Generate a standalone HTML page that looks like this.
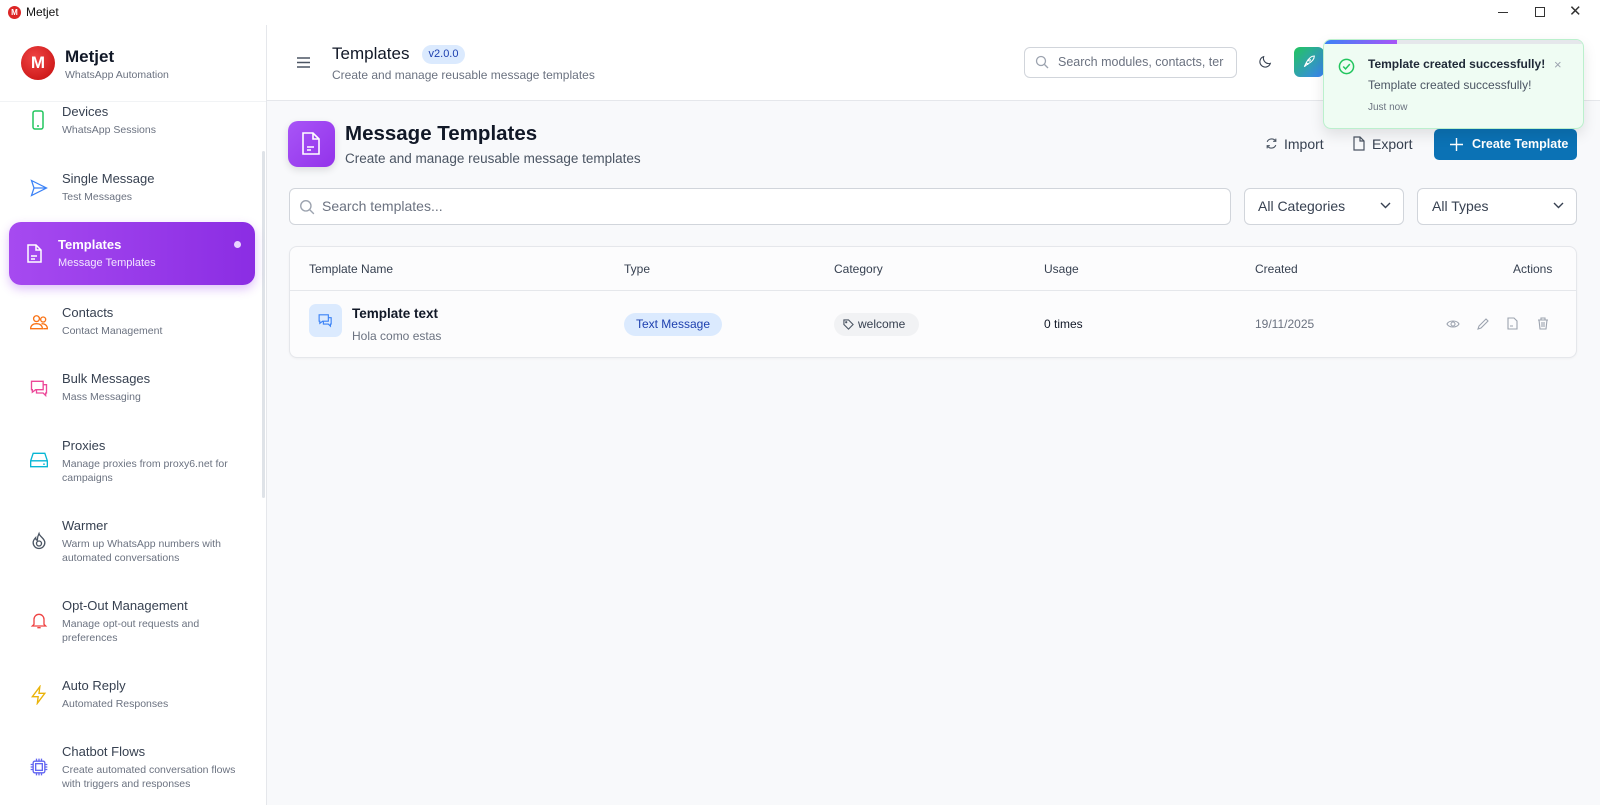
<!DOCTYPE html>
<html><head><meta charset="utf-8"><style>
*{box-sizing:border-box;margin:0;padding:0}
body{width:1600px;height:805px;overflow:hidden;background:#fff;font-family:"Liberation Sans",sans-serif;color:#111827;position:relative}
.a{position:absolute}
svg{display:block}
.nt{position:absolute;left:62px;font-size:13px;color:#374151;line-height:16px}
.ns{position:absolute;left:62px;font-size:10.5px;color:#6b7280;line-height:14px;width:180px}
.ni{position:absolute;left:29px}
.th{position:absolute;top:262px;font-size:12px;color:#374151}
</style></head><body>
<div class="a" style="left:0;top:0;width:1600px;height:25px;background:#fff"></div>
<div class="a" style="left:8px;top:6px;width:13px;height:13px;border-radius:50%;background:#dc2626;color:#fff;font-size:8px;font-weight:bold;text-align:center;line-height:13px">M</div>
<div class="a" style="left:26px;top:5px;font-size:12px;color:#111">Metjet</div>
<div class="a" style="left:1498px;top:12px;width:10px;height:1px;background:#333"></div>
<div class="a" style="left:1535px;top:7px;width:10px;height:10px;border:1px solid #333"></div>
<div class="a" style="left:1569px;top:2px;font-size:15px;color:#333">✕</div>
<div class="a" style="left:266px;top:25px;width:1px;height:780px;background:#e5e7eb"></div>
<div class="a" style="left:21px;top:46px;width:34px;height:34px;border-radius:50%;background:radial-gradient(circle at 40% 35%,#ef4444,#c40c0c);color:#fff;font-weight:bold;font-size:17px;text-align:center;line-height:34px">M</div>
<div class="a" style="left:65px;top:47px;font-size:17px;font-weight:bold;color:#111827">Metjet</div>
<div class="a" style="left:65px;top:69px;font-size:10.5px;color:#6b7280">WhatsApp Automation</div>
<div class="a" style="left:0;top:101px;width:266px;height:1px;background:#f1f3f5"></div>
<div class="a" style="left:262px;top:151px;width:3px;height:347px;background:#dfe3e8;border-radius:2px"></div>

<div class="nt" style="top:104px">Devices</div><div class="ns" style="top:123px">WhatsApp Sessions</div>
<svg class="ni" style="top:110px" width="18" height="20" viewBox="0 0 18 20" fill="none" stroke="#22c55e" stroke-width="1.5"><rect x="4" y="1" width="10" height="18" rx="2"/><path d="M8 16h2"/></svg>
<div class="nt" style="top:171px">Single Message</div><div class="ns" style="top:190px">Test Messages</div>
<svg class="ni" style="top:178px" width="20" height="20" viewBox="0 0 24 24" fill="none" stroke="#3b82f6" stroke-width="1.5"><path d="M3 3l18 9-18 9 3-9zM6 12h15"/></svg>

<div class="a" style="left:9px;top:222px;width:246px;height:63px;border-radius:12px;background:linear-gradient(90deg,#a64af0,#8b2de3);box-shadow:0 4px 10px rgba(147,51,234,.3)"></div>
<div class="a" style="left:58px;top:237px;font-size:13px;font-weight:bold;color:#fff">Templates</div>
<div class="a" style="left:58px;top:257px;font-size:11px;color:#f3e8ff">Message Templates</div>
<div class="a" style="left:234px;top:241px;width:7px;height:7px;border-radius:50%;background:#e9d5ff"></div>
<svg class="a" style="left:25px;top:244px" width="18" height="20" viewBox="0 0 18 20" fill="none" stroke="#fff" stroke-width="1.5"><path d="M3 1h8l5 5v12H3z"/><path d="M11 1v5h5M6 12h6M6 15h4"/></svg>

<div class="nt" style="top:305px">Contacts</div><div class="ns" style="top:324px">Contact Management</div>
<svg class="ni" style="top:312px" width="20" height="20" viewBox="0 0 24 24" fill="none" stroke="#f97316" stroke-width="1.6"><circle cx="9" cy="8" r="3.5"/><circle cx="17" cy="9" r="3"/><path d="M2 20c0-4 3-6 7-6s7 2 7 6zM15 14c4 0 7 2 7 6h-5"/></svg>
<div class="nt" style="top:371px">Bulk Messages</div><div class="ns" style="top:390px">Mass Messaging</div>
<svg class="ni" style="top:378px" width="20" height="20" viewBox="0 0 24 24" fill="none" stroke="#ec4899" stroke-width="1.6"><path d="M3 4h14v10H8l-4 3v-3H3zM17 8h4v10h-1v3l-3-3H9v-4"/></svg>
<div class="nt" style="top:438px">Proxies</div><div class="ns" style="top:457px">Manage proxies from proxy6.net for campaigns</div>
<svg class="ni" style="top:451px" width="20" height="18" viewBox="0 0 24 20" fill="none" stroke="#06b6d4" stroke-width="1.6"><path d="M5 2h14l3 9v7H2v-7zM2 11h20M17 15h2"/></svg>
<div class="nt" style="top:518px">Warmer</div><div class="ns" style="top:537px">Warm up WhatsApp numbers with automated conversations</div>
<svg class="ni" style="top:531px" width="20" height="20" viewBox="0 0 24 24" fill="none" stroke="#4b5563" stroke-width="1.6"><path d="M12 3c1 4 7 6 7 11a7 7 0 01-14 0c0-3 2-5 3-6 0 2 1 3 2 3 0-3 1-6 2-8z"/><circle cx="12" cy="15" r="3"/></svg>
<div class="nt" style="top:598px">Opt-Out Management</div><div class="ns" style="top:617px">Manage opt-out requests and preferences</div>
<svg class="ni" style="top:611px" width="20" height="20" viewBox="0 0 24 24" fill="none" stroke="#ef4444" stroke-width="1.6"><path d="M6 16V10a6 6 0 0112 0v6l2 2H4zM10 20h4"/></svg>
<div class="nt" style="top:678px">Auto Reply</div><div class="ns" style="top:697px">Automated Responses</div>
<svg class="ni" style="top:685px" width="20" height="20" viewBox="0 0 24 24" fill="none" stroke="#eab308" stroke-width="1.6"><path d="M13 2L4 14h7l-1 8 9-12h-7z"/></svg>
<div class="nt" style="top:744px">Chatbot Flows</div><div class="ns" style="top:763px">Create automated conversation flows with triggers and responses</div>
<svg class="ni" style="top:757px" width="20" height="20" viewBox="0 0 24 24" fill="none" stroke="#6366f1" stroke-width="1.6"><rect x="5" y="5" width="14" height="14" rx="2"/><rect x="8" y="8" width="8" height="8"/><path d="M9 2v3M12 2v3M15 2v3M9 19v3M12 19v3M15 19v3M2 9h3M2 12h3M2 15h3M19 9h3M19 12h3M19 15h3"/></svg>

<div class="a" style="left:267px;top:100px;width:1333px;height:705px;background:#f8f9fb"></div>
<div class="a" style="left:267px;top:100px;width:1333px;height:1px;background:#e5e7eb"></div>
<svg class="a" style="left:297px;top:57px" width="13" height="11" viewBox="0 0 13 11" stroke="#4b5563" stroke-width="1.5"><path d="M0 1h13M0 5.5h13M0 10h13"/></svg>
<div class="a" style="left:332px;top:44px;font-size:17px;color:#111827">Templates</div>
<div class="a" style="left:422px;top:45px;width:43px;height:19px;border-radius:10px;background:#dbeafe;color:#1e40af;font-size:11px;text-align:center;line-height:19px">v2.0.0</div>
<div class="a" style="left:332px;top:68px;font-size:12px;color:#6b7280">Create and manage reusable message templates</div>
<div class="a" style="left:1024px;top:47px;width:213px;height:31px;border:1px solid #d1d5db;border-radius:6px;background:#fff"></div>
<svg class="a" style="left:1035px;top:55px" width="14" height="14" viewBox="0 0 14 14" fill="none" stroke="#9ca3af" stroke-width="1.3"><circle cx="6" cy="6" r="4.5"/><path d="M9.5 9.5L13 13"/></svg>
<div class="a" style="left:1058px;top:55px;font-size:12.5px;color:#6b7280;width:172px;overflow:hidden;white-space:nowrap">Search modules, contacts, ter</div>
<svg class="a" style="left:1257px;top:54px" width="16" height="16" viewBox="0 0 24 24" fill="none" stroke="#374151" stroke-width="1.6"><path d="M20 14A8 8 0 0110 4a8 8 0 1010 10z"/></svg>
<div class="a" style="left:1294px;top:47px;width:30px;height:30px;border-radius:6px;background:linear-gradient(135deg,#22c55e,#3b82f6)"></div>
<svg class="a" style="left:1301px;top:54px" width="16" height="16" viewBox="0 0 24 24" fill="none" stroke="#fff" stroke-width="1.6"><path d="M5 19l3-6c4-8 9-10 12-10 0 3-2 8-10 12zM8 13l3 3M14 9a1.5 1.5 0 100 .1"/></svg>

<div class="a" style="left:288px;top:121px;width:47px;height:46px;border-radius:10px;background:linear-gradient(135deg,#a855f7,#9333ea);box-shadow:0 3px 8px rgba(0,0,0,.12)"></div>
<svg class="a" style="left:301px;top:132px" width="21" height="24" viewBox="0 0 21 24" fill="none" stroke="#fff" stroke-width="1.6"><path d="M2 1h10l6 6v15H2z"/><path d="M12 1v6h6M6 15h7M6 18h4"/></svg>
<div class="a" style="left:345px;top:122px;font-size:20.5px;font-weight:bold;color:#111827">Message Templates</div>
<div class="a" style="left:345px;top:151px;font-size:13.5px;color:#4b5563">Create and manage reusable message templates</div>
<svg class="a" style="left:1265px;top:137px" width="13" height="13" viewBox="0 0 24 24" fill="none" stroke="#4b5563" stroke-width="2"><path d="M20 8A9 9 0 004 9M4 16a9 9 0 0016-1M20 3v5h-5M4 21v-5h5"/></svg>
<div class="a" style="left:1284px;top:136px;font-size:14px;color:#374151">Import</div>
<svg class="a" style="left:1353px;top:136px" width="12" height="15" viewBox="0 0 12 15" fill="none" stroke="#4b5563" stroke-width="1.2"><path d="M1 1h6l4 4v9H1zM7 1v4h4"/></svg>
<div class="a" style="left:1372px;top:136px;font-size:14px;color:#374151">Export</div>
<div class="a" style="left:1434px;top:129px;width:143px;height:31px;border-radius:5px;background:#0b72b5"></div>
<svg class="a" style="left:1450px;top:138px" width="13" height="13" viewBox="0 0 13 13" stroke="#fff" stroke-width="1.4"><path d="M6.5 0v13M0 6.5h13"/></svg>
<div class="a" style="left:1472px;top:137px;font-size:12.5px;font-weight:bold;color:#fff">Create Template</div>

<div class="a" style="left:289px;top:188px;width:942px;height:37px;border:1px solid #d1d5db;border-radius:6px;background:#fff"></div>
<svg class="a" style="left:299px;top:199px" width="16" height="16" viewBox="0 0 14 14" fill="none" stroke="#9ca3af" stroke-width="1.2"><circle cx="6" cy="6" r="4.5"/><path d="M9.5 9.5L13 13"/></svg>
<div class="a" style="left:322px;top:198px;font-size:14px;color:#6b7280">Search templates...</div>
<div class="a" style="left:1244px;top:188px;width:160px;height:37px;border:1px solid #d1d5db;border-radius:6px;background:#fff"></div>
<div class="a" style="left:1258px;top:198px;font-size:14px;color:#374151">All Categories</div>
<svg class="a" style="left:1380px;top:202px" width="11" height="7" viewBox="0 0 11 7" fill="none" stroke="#374151" stroke-width="1.4"><path d="M1 1l4.5 4.5L10 1"/></svg>
<div class="a" style="left:1417px;top:188px;width:160px;height:37px;border:1px solid #d1d5db;border-radius:6px;background:#fff"></div>
<div class="a" style="left:1432px;top:198px;font-size:14px;color:#374151">All Types</div>
<svg class="a" style="left:1553px;top:202px" width="11" height="7" viewBox="0 0 11 7" fill="none" stroke="#374151" stroke-width="1.4"><path d="M1 1l4.5 4.5L10 1"/></svg>

<div class="a" style="left:289px;top:246px;width:1288px;height:112px;border:1px solid #e5e7eb;border-radius:8px;background:#fcfcfd;box-shadow:0 1px 2px rgba(0,0,0,.04)"></div>
<div class="a" style="left:290px;top:290px;width:1286px;height:1px;background:#e5e7eb"></div>
<div class="th" style="left:309px">Template Name</div>
<div class="th" style="left:624px">Type</div>
<div class="th" style="left:834px">Category</div>
<div class="th" style="left:1044px">Usage</div>
<div class="th" style="left:1255px">Created</div>
<div class="th" style="left:1513px">Actions</div>
<div class="a" style="left:309px;top:304px;width:33px;height:33px;border-radius:7px;background:#dbeafe"></div>
<svg class="a" style="left:317px;top:312px" width="17" height="17" viewBox="0 0 24 24" fill="none" stroke="#3b82f6" stroke-width="1.6"><path d="M3 4h13v9H8l-4 3v-3H3zM16 8h4v9h-1v3l-3-3H9v-4"/></svg>
<div class="a" style="left:352px;top:306px;font-size:13.5px;font-weight:bold;color:#111827">Template text</div>
<div class="a" style="left:352px;top:329px;font-size:12px;color:#6b7280">Hola como estas</div>
<div class="a" style="left:624px;top:313px;width:98px;height:23px;border-radius:12px;background:#dbeafe;color:#1e40af;font-size:12px;text-align:center;line-height:23px">Text Message</div>
<div class="a" style="left:834px;top:313px;width:85px;height:23px;border-radius:12px;background:#f1f2f4;color:#374151;font-size:12px;line-height:23px;padding-left:24px">welcome</div>
<svg class="a" style="left:843px;top:319px" width="11" height="11" viewBox="0 0 12 12" fill="none" stroke="#4b5563" stroke-width="1.2"><path d="M1 1h5l5 5-5 5-5-5z"/><circle cx="3.5" cy="3.5" r=".6"/></svg>
<div class="a" style="left:1044px;top:317px;font-size:12px;color:#111827">0 times</div>
<div class="a" style="left:1255px;top:317px;font-size:12px;color:#6b7280">19/11/2025</div>
<svg class="a" style="left:1446px;top:318px" width="14" height="12" viewBox="0 0 14 12" fill="none" stroke="#9ca3af" stroke-width="1.1"><path d="M1 6c2-4 10-4 12 0-2 4-10 4-12 0z"/><circle cx="7" cy="6" r="2"/></svg>
<svg class="a" style="left:1477px;top:317px" width="13" height="13" viewBox="0 0 13 13" fill="none" stroke="#9ca3af" stroke-width="1.1"><path d="M1 12l1-3 7-7 2 2-7 7z"/></svg>
<svg class="a" style="left:1507px;top:317px" width="11" height="13" viewBox="0 0 11 13" fill="none" stroke="#9ca3af" stroke-width="1.1"><path d="M1 1h6l3 3v8H1zM3 9h3"/></svg>
<svg class="a" style="left:1537px;top:317px" width="12" height="13" viewBox="0 0 12 13" fill="none" stroke="#9ca3af" stroke-width="1.1"><path d="M1 3h10M4 3V1h4v2M2 3l1 9h6l1-9M5 5v5M7 5v5"/></svg>

<div class="a" style="left:1323px;top:39px;width:261px;height:90px;border-radius:8px;background:#effcf3;border:1px solid #bbf0cd;box-shadow:0 6px 14px rgba(0,0,0,.1);overflow:hidden">
<div style="position:absolute;left:0;top:0;width:261px;height:4px;background:#e5e7eb"></div>
<div style="position:absolute;left:0;top:0;width:73px;height:4px;background:linear-gradient(90deg,#3b82f6,#a855f7)"></div>
</div>
<svg class="a" style="left:1338px;top:58px" width="17" height="17" viewBox="0 0 18 18" fill="none" stroke="#22c55e" stroke-width="1.6"><circle cx="9" cy="9" r="7.5"/><path d="M5.5 9l2.5 2.5 4.5-5"/></svg>
<div class="a" style="left:1368px;top:57px;font-size:12px;font-weight:bold;color:#1f2937">Template created successfully!</div>
<div class="a" style="left:1368px;top:78px;font-size:12px;color:#4b5563">Template created successfully!</div>
<div class="a" style="left:1368px;top:102px;font-size:10px;color:#6b7280">Just now</div>
<div class="a" style="left:1554px;top:57px;font-size:13px;color:#9ca3af">×</div>
</body></html>
